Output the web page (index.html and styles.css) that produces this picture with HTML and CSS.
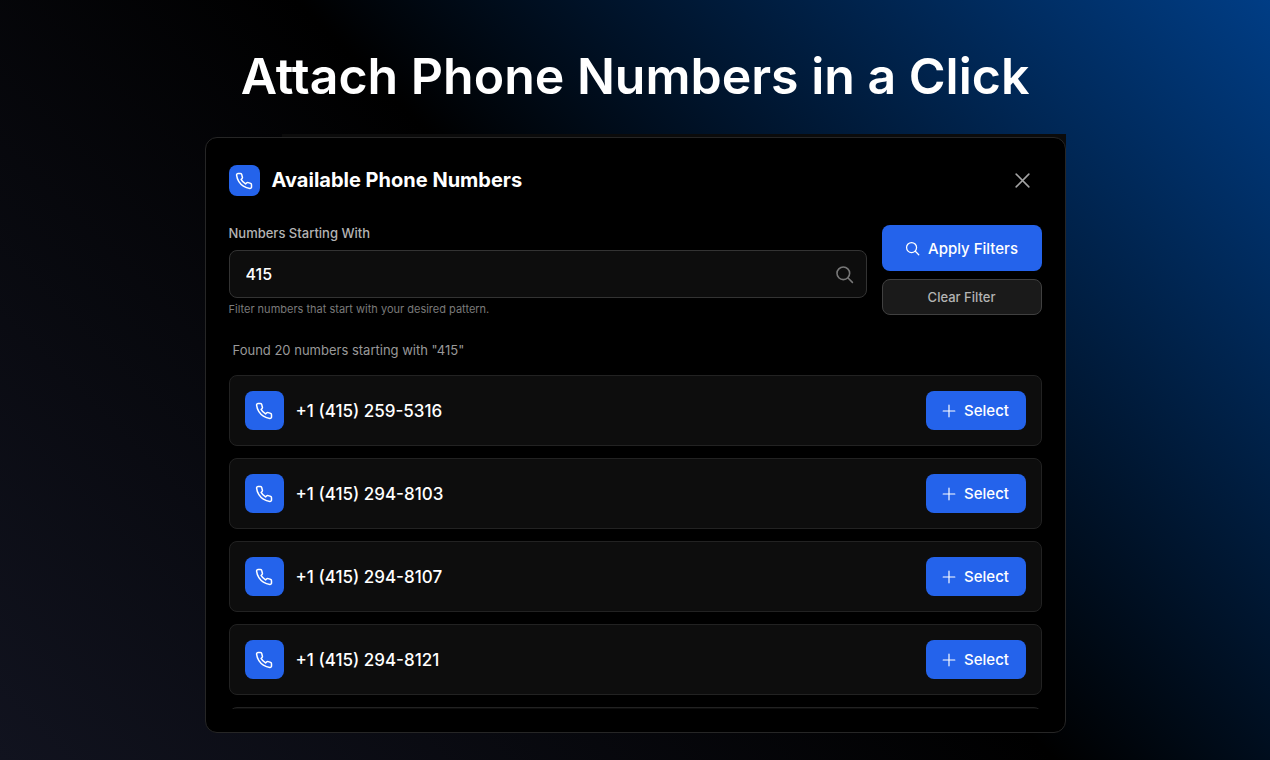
FILE: index.html
```html
<!DOCTYPE html>
<html lang="en">
<head>
  <meta charset="UTF-8">
  <meta name="viewport" content="width=device-width, initial-scale=1">
  <title>Attach Phone Numbers in a Click</title>
  <link rel="stylesheet" href="styles.css">
</head>
<body>
  <svg class="sprite" width="0" height="0" aria-hidden="true">
    <symbol id="phone" viewBox="0 0 24 24">
      <path d="M22 16.92v3a2 2 0 0 1-2.18 2 19.79 19.79 0 0 1-8.63-3.07 19.5 19.5 0 0 1-6-6 19.79 19.79 0 0 1-3.07-8.67A2 2 0 0 1 4.11 2h3a2 2 0 0 1 2 1.72c.13.96.36 1.9.7 2.81a2 2 0 0 1-.45 2.11L8.09 9.91a16 16 0 0 0 6 6l1.27-1.27a2 2 0 0 1 2.11-.45c.91.34 1.85.57 2.81.7A2 2 0 0 1 22 16.92z"/>
    </symbol>
    <symbol id="search" viewBox="0 0 24 24">
      <circle cx="10.5" cy="10.5" r="8"/>
      <path d="M16.5 16.5L22 22"/>
    </symbol>
    <symbol id="plus" viewBox="0 0 24 24">
      <path d="M12 2v20M2 12h20"/>
    </symbol>
    <symbol id="close" viewBox="0 0 24 24">
      <path d="M4 4l16 16M20 4L4 20"/>
    </symbol>
  </svg>

  <h1>Attach Phone Numbers in a Click</h1>

  <div class="modal-wrap">
    <div class="modal" role="dialog" aria-labelledby="modalTitle">
      <div class="modal-header">
        <span class="phone-badge small"><svg class="icon"><use href="#phone"/></svg></span>
        <h2 id="modalTitle">Available Phone Numbers</h2>
        <button class="close-btn" aria-label="Close"><svg class="icon"><use href="#close"/></svg></button>
      </div>

      <form class="filters" onsubmit="return false">
        <div class="field">
          <label for="pattern">Numbers Starting With</label>
          <div class="input-box">
            <input type="text" id="pattern" value="415">
            <svg class="icon"><use href="#search"/></svg>
          </div>
          <p class="hint">Filter numbers that start with your desired pattern.</p>
        </div>
        <div class="filter-actions">
          <button class="btn apply-btn" type="submit"><svg class="icon"><use href="#search"/></svg>Apply Filters</button>
          <button class="clear-btn" type="reset">Clear Filter</button>
        </div>
      </form>

      <p class="result-count">Found 20 numbers starting with "415"</p>

      <ul class="number-list">
        <li class="number-row">
          <span class="phone-badge"><svg class="icon"><use href="#phone"/></svg></span>
          <span class="number">+1 (415) 259-5316</span>
          <button class="btn select-btn"><svg class="icon"><use href="#plus"/></svg>Select</button>
        </li>
        <li class="number-row">
          <span class="phone-badge"><svg class="icon"><use href="#phone"/></svg></span>
          <span class="number">+1 (415) 294-8103</span>
          <button class="btn select-btn"><svg class="icon"><use href="#plus"/></svg>Select</button>
        </li>
        <li class="number-row">
          <span class="phone-badge"><svg class="icon"><use href="#phone"/></svg></span>
          <span class="number">+1 (415) 294-8107</span>
          <button class="btn select-btn"><svg class="icon"><use href="#plus"/></svg>Select</button>
        </li>
        <li class="number-row">
          <span class="phone-badge"><svg class="icon"><use href="#phone"/></svg></span>
          <span class="number">+1 (415) 294-8121</span>
          <button class="btn select-btn"><svg class="icon"><use href="#plus"/></svg>Select</button>
        </li>
        <li class="number-row"></li>
      </ul>
    </div>
  </div>
</body>
</html>
```
FILE: styles.css
```css
* {
  box-sizing: border-box;
}
body {
  margin: 0;
  height: 100vh;
  padding: 44px 24px 27px;
  display: flex;
  flex-direction: column;
  align-items: center;
  font-family: Inter, 'Liberation Sans', sans-serif;
  background: linear-gradient(45deg, #11131f 0%, #000 52%, #003d85 100%);
  color: #fff;
  overflow: hidden;
}
h1, h2, p, ul {
  margin: 0;
  padding: 0;
}
h1 {
  font-size: 50px;
  line-height: 64px;
  font-weight: 600;
  text-align: center;
  margin-bottom: 26px;
}
button, input {
  font-family: inherit;
}
button {
  cursor: pointer;
}
.sprite {
  position: absolute;
}
.icon {
  width: 18px;
  height: 18px;
  fill: none;
  stroke: currentColor;
  stroke-width: 2;
  stroke-linecap: round;
  stroke-linejoin: round;
  flex: none;
}

/* modal */
.modal-wrap {
  flex: 1;
  min-height: 0;
  width: 100%;
  max-width: 861px;
  padding-top: 3px;
  display: flex;
  background: linear-gradient(90deg, transparent 9%, #0b0b0b 9%) no-repeat top / 100% 24px;
}
.modal {
  flex: 1;
  min-width: 0;
  display: flex;
  flex-direction: column;
  background: #000;
  border: 1px solid #262626;
  border-radius: 12px;
  padding: 23px;
}
.modal-header {
  display: flex;
  align-items: center;
  gap: 12px;
  margin-bottom: 25px;
}
.modal-header h2 {
  flex: 1;
  font-size: 20px;
  line-height: 31px;
  font-weight: 700;
}
.phone-badge {
  width: 39px;
  height: 39px;
  display: flex;
  align-items: center;
  justify-content: center;
  flex: none;
  background: #2463eb;
  border-radius: 8px;
}
.phone-badge.small {
  width: 31px;
  height: 31px;
}
.close-btn {
  display: flex;
  padding: 10px;
  background: none;
  border: none;
  color: #a3a3a3;
}
.close-btn .icon {
  width: 19px;
  height: 19px;
}

/* filters */
.filters {
  display: flex;
  gap: 15px;
}
.field {
  flex: 1;
  min-width: 0;
}
.field label {
  display: block;
  font-size: 13px;
  line-height: 17px;
  margin-bottom: 8px;
  font-weight: 500;
  color: #b4b4b4;
}
.input-box {
  display: flex;
  align-items: center;
  height: 48px;
  padding: 0 12px 0 16px;
  background: #0d0d0d;
  border: 1px solid #333;
  border-radius: 8px;
  color: #777;
}
.input-box input {
  flex: 1;
  min-width: 0;
  padding: 0;
  background: none;
  border: none;
  outline: none;
  color: #fff;
  font-size: 16px;
  font-weight: 500;
}
.input-box .icon {
  width: 19px;
  height: 19px;
}
.hint {
  font-size: 11px;
  line-height: 15px;
  margin-top: 4px;
  color: #7a7a7a;
}
.filter-actions {
  width: 160px;
  display: flex;
  flex-direction: column;
  gap: 8px;
}
.btn {
  display: flex;
  align-items: center;
  justify-content: center;
  gap: 8px;
  padding: 0;
  background: #2463eb;
  color: #fff;
  border: none;
  border-radius: 8px;
  font-size: 15px;
  font-weight: 500;
}
.btn:hover {
  background: #1d4ed8;
}
.btn .icon {
  width: 15px;
  height: 15px;
}
.apply-btn {
  height: 46px;
}
.clear-btn {
  height: 36px;
  background: #1a1a1a;
  border: 1px solid #404040;
  border-radius: 8px;
  color: #b4b4b4;
  font-size: 13px;
  font-weight: 500;
}

/* results */
.result-count {
  font-size: 13px;
  line-height: 17px;
  margin: 25px 4px 16px;
  color: #999;
}
.number-list {
  flex: 1;
  min-height: 0;
  overflow: hidden;
  list-style: none;
}
.number-row {
  display: flex;
  align-items: center;
  gap: 12px;
  height: 71px;
  padding: 0 15px;
  margin-bottom: 12px;
  background: #0d0d0d;
  border: 1px solid #222;
  border-radius: 8px;
}
.number {
  flex: 1;
  font-size: 17px;
  font-weight: 500;
}
.select-btn {
  width: 100px;
  height: 39px;
}
.select-btn .icon {
  width: 14px;
  height: 14px;
}
```
